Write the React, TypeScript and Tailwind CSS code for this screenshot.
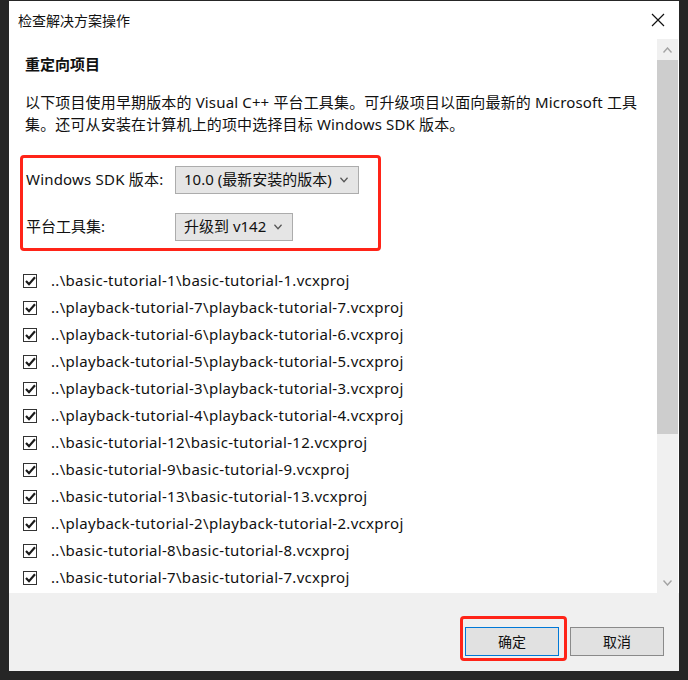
import React from "react";

const PROJECTS: string[] = [
  "..\\basic-tutorial-1\\basic-tutorial-1.vcxproj",
  "..\\playback-tutorial-7\\playback-tutorial-7.vcxproj",
  "..\\playback-tutorial-6\\playback-tutorial-6.vcxproj",
  "..\\playback-tutorial-5\\playback-tutorial-5.vcxproj",
  "..\\playback-tutorial-3\\playback-tutorial-3.vcxproj",
  "..\\playback-tutorial-4\\playback-tutorial-4.vcxproj",
  "..\\basic-tutorial-12\\basic-tutorial-12.vcxproj",
  "..\\basic-tutorial-9\\basic-tutorial-9.vcxproj",
  "..\\basic-tutorial-13\\basic-tutorial-13.vcxproj",
  "..\\playback-tutorial-2\\playback-tutorial-2.vcxproj",
  "..\\basic-tutorial-8\\basic-tutorial-8.vcxproj",
  "..\\basic-tutorial-7\\basic-tutorial-7.vcxproj",
];

const FONT = "font-['Noto_Sans','Noto_Sans_CJK_SC',sans-serif]";

function Chevron({ up = false, className = "" }: { up?: boolean; className?: string }) {
  return (
    <svg width="9" height="6" viewBox="0 0 9 6" className={className}>
      <path
        d={up ? "M0.5 5.5 L4.5 1 L8.5 5.5" : "M0.5 0.5 L4.5 5 L8.5 0.5"}
        fill="none"
        stroke="currentColor"
        strokeWidth="1.4"
      />
    </svg>
  );
}

function Dropdown({ value, width }: { value: string; width: string }) {
  return (
    <div
      className={`${width} h-[28px] flex items-center justify-between pl-[8px] pr-[10px] bg-[#e5e5e5] border border-[#acacac] text-[15px] text-[#111]`}
    >
      <span>{value}</span>
      <Chevron className="text-[#555] w-[8px]" />
    </div>
  );
}

function CheckRow({ label }: { label: string }) {
  return (
    <div className="h-[27px] flex items-center">
      <div className="w-[14px] h-[14px] ml-[14px] border border-[#333] bg-white flex items-center justify-center">
        <svg width="11" height="10" viewBox="0 0 11 10">
          <path d="M1 5 L4 8.2 L10 1.2" fill="none" stroke="#1a1a1a" strokeWidth="2.2" />
        </svg>
      </div>
      <span className="ml-[14px] text-[15px] tracking-[0.3px] text-[#111] whitespace-nowrap">{label}</span>
    </div>
  );
}

export default function App() {
  return (
    <div className={`w-[688px] h-[680px] bg-[#262626] pt-[1px] px-[9px] pb-[9px] ${FONT}`}>
      <div className="w-full h-full bg-white flex flex-col">
        {/* Title bar */}
        <div className="h-[38px] flex items-center justify-between pl-[9px] pr-[14px] shrink-0">
          <span className="text-[14px] text-[#111]">检查解决方案操作</span>
          <svg width="14" height="14" viewBox="0 0 14 14">
            <path d="M1 1 L13 13 M13 1 L1 13" stroke="#111" strokeWidth="1.2" />
          </svg>
        </div>

        {/* Body with scrollbar */}
        <div className="h-[554px] flex shrink-0">
          <div className="flex-1 overflow-hidden pt-[14px]">
            <div className="pl-[16px] text-[15px] font-bold text-[#111] leading-[22px]">重定向项目</div>
            <p className="pl-[16px] pr-[8px] mt-[16px] text-[15px] tracking-[0.15px] text-[#111] leading-[22px]">
              以下项目使用早期版本的 Visual C++ 平台工具集。可升级项目以面向最新的 Microsoft 工具集。还可从安装在计算机上的项中选择目标 Windows SDK 版本。
            </p>

            <div className="ml-[11px] mt-[20px] w-[361px] h-[96px] border-[3px] border-[#ff2418] rounded-[4px] flex flex-col justify-center gap-[19px] text-[15px] text-[#111]">
              <div className="flex items-center">
                <span className="w-[152px] pl-[3px] tracking-[0.2px]">Windows SDK 版本:</span>
                <Dropdown value="10.0 (最新安装的版本)" width="w-[184px]" />
              </div>
              <div className="flex items-center">
                <span className="w-[152px] pl-[3px]">平台工具集:</span>
                <Dropdown value="升级到 v142" width="w-[118px]" />
              </div>
            </div>

            <div className="mt-[16px]">
              {PROJECTS.map((p) => (
                <CheckRow key={p} label={p} />
              ))}
            </div>
          </div>

          {/* Scrollbar */}
          <div className="w-[21px] flex flex-col bg-[#f0f0f0] mr-[1px]">
            <div className="h-[21px] flex items-center justify-center text-[#a3a3a3]">
              <Chevron up />
            </div>
            <div className="h-[374px] bg-[#cdcdcd]" />
            <div className="flex-1" />
            <div className="h-[21px] flex items-center justify-center text-[#a3a3a3]">
              <Chevron />
            </div>
          </div>
        </div>

        {/* Footer */}
        <div className="flex-1 bg-[#f0f0f0] flex justify-end items-start pt-[34px] pr-[15px] gap-[11px]">
          <div className="relative">
            <button className="w-[94px] h-[29px] bg-[#e1e1e1] border border-[#0078d7] text-[14px] text-[#111]">
              确定
            </button>
            <div className="absolute left-[-5px] top-[-11px] w-[107px] h-[45px] border-[3px] border-[#ff2418] rounded-[4px]" />
          </div>
          <button className="w-[94px] h-[29px] bg-[#e1e1e1] border border-[#8a8a8a] text-[14px] text-[#111]">
            取消
          </button>
        </div>
      </div>
    </div>
  );
}
